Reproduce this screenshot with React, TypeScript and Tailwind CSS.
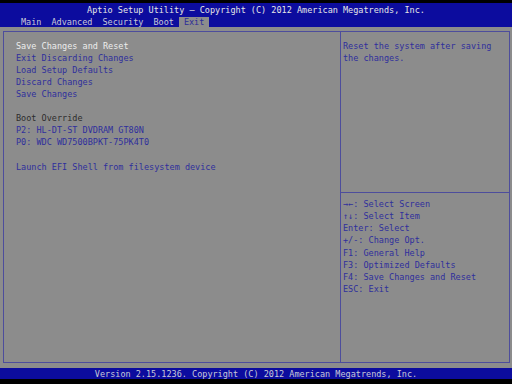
import React from "react";

export default function App() {
  const tabs = ["Main", "Advanced", "Security", "Boot", "Exit"];
  const keys = [
    "→←: Select Screen",
    "↑↓: Select Item",
    "Enter: Select",
    "+/-: Change Opt.",
    "F1: General Help",
    "F3: Optimized Defaults",
    "F4: Save Changes and Reset",
    "ESC: Exit",
  ];
  return (
    <div
      className="w-[512px] h-[384px] bg-black flex flex-col pt-[3px] overflow-hidden text-[8.5px] leading-[12px]"
      style={{ fontFamily: '"DejaVu Sans Mono", monospace' }}
    >
      <div className="bg-[#0c0c9e] h-[24px] flex flex-col">
        <div className="h-[14px] flex items-center justify-center text-[#e6e6e6]">
          Aptio Setup Utility – Copyright (C) 2012 American Megatrends, Inc.
        </div>
        <div className="h-[10px] flex pl-[16px]">
          {tabs.map((t) => (
            <div
              key={t}
              className={
                t === "Exit"
                  ? "px-[5px] h-[10px] flex items-center bg-[#8c8c8c] text-[#2c2c98]"
                  : "px-[5px] h-[10px] flex items-center text-[#c8c8d8]"
              }
            >
              {t}
            </div>
          ))}
        </div>
      </div>
      <div className="bg-[#8c8c8c] flex-1 pt-[4px] pb-[5px] pl-[3px] pr-[2px] flex">
        <div className="flex-1 flex border border-[#4d4d9c]">
          <div className="w-[337px] border-r border-[#4d4d9c] pl-[12px] pt-[8px] flex flex-col">
            <div className="text-[#ececec]">Save Changes and Reset</div>
            <div className="text-[#2f2f9c]">Exit Discarding Changes</div>
            <div className="text-[#2f2f9c]">Load Setup Defaults</div>
            <div className="text-[#2f2f9c]">Discard Changes</div>
            <div className="text-[#2f2f9c]">Save Changes</div>
            <div className="h-[12px]" />
            <div className="text-[#2c2c2c]">Boot Override</div>
            <div className="text-[#2f2f9c]">P2: HL-DT-ST DVDRAM GT80N</div>
            <div className="text-[#2f2f9c]">P0: WDC WD7500BPKT-75PK4T0</div>
            <div className="h-[13px]" />
            <div className="text-[#2f2f9c]">Launch EFI Shell from filesystem device</div>
          </div>
          <div className="flex-1 flex flex-col">
            <div className="h-[161px] border-b border-[#4d4d9c] pl-[2px] pt-[8px] text-[#2f2f9c]">
              <div>Reset the system after saving</div>
              <div>the changes.</div>
            </div>
            <div className="pl-[2px] pt-[5px] text-[#2f2f9c] flex flex-col">
              {keys.map((k) => (
                <div key={k} className="h-[12.15px]">
                  {k}
                </div>
              ))}
            </div>
          </div>
        </div>
      </div>
      <div className="bg-[#0c0c9e] h-[11px] flex items-center justify-center text-[#c8c8d8]">
        Version 2.15.1236. Copyright (C) 2012 American Megatrends, Inc.
      </div>
      <div className="h-[5px] bg-black" />
    </div>
  );
}
